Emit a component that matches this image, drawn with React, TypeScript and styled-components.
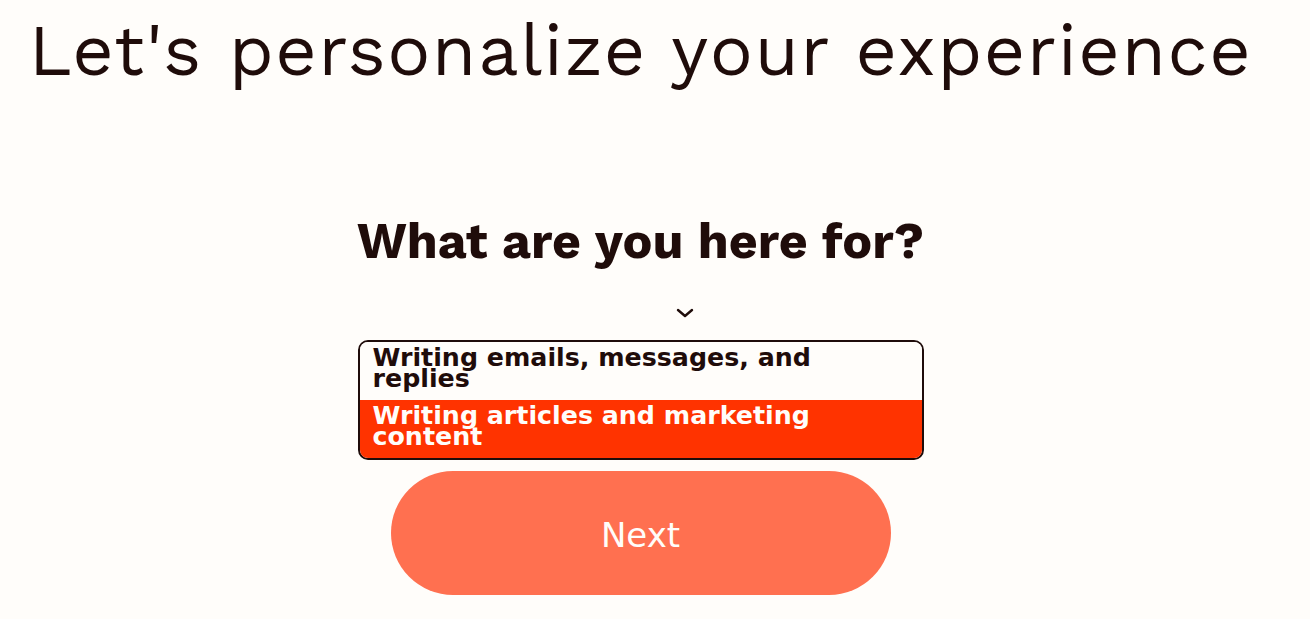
import React, { FC, useState } from 'react'
import styled, { createGlobalStyle } from 'styled-components'

const GlobalStyle = createGlobalStyle`
  html, body {
    margin: 0;
    padding: 0;
    background: #fffdfa;
  }
  * { box-sizing: border-box; }
`

const options: string[] = [
  'Writing emails, messages, and replies',
  'Writing articles and marketing content',
]

const App: FC = () => {
  const [selected, setSelected] = useState<number>(1)

  return (
    <Page>
      <GlobalStyle />
      <Title>Let's personalize your experience</Title>
      <Form>
        <Question>What are you here for?</Question>
        <Chevron viewBox="0 0 18 10" aria-hidden>
          <path d="M2 2 L9 8 L16 2" fill="none" stroke="#1f0c0a" strokeWidth="2.4" strokeLinecap="round" strokeLinejoin="round" />
        </Chevron>
        <ListBox role="listbox">
          {options.map((label, i) =>
            <Option key={`option_${i}`} selected={i === selected} onClick={() => setSelected(i)}>
              {label}
            </Option>
          )}
        </ListBox>
        <NextButton>Next</NextButton>
      </Form>
    </Page>
  )
}

const Page = styled.div`
  display: flex;
  flex-direction: column;
  align-items: center;
  width: 1281px;
  height: 619px;
  overflow: hidden;
  color: #1f0c0a;
`

const Title = styled.h1`
  margin: 7px 0 0 0;
  font-family: "Work Sans", Inter, "Open Sans", sans-serif;
  font-weight: 400;
  font-size: 72px;
  line-height: 86px;
  letter-spacing: 1.5px;
  white-space: nowrap;
`

const Form = styled.div`
  display: flex;
  flex-direction: column;
  align-items: center;
  margin-top: 120px;
`

const Question = styled.h2`
  margin: 0;
  font-family: "Work Sans", Inter, "Liberation Sans", sans-serif;
  font-weight: 700;
  font-size: 50px;
  line-height: 56px;
`

const Chevron = styled.svg`
  width: 18px;
  height: 10px;
  margin-top: 39px;
  margin-left: 88px;
`

const ListBox = styled.div`
  display: flex;
  flex-direction: column;
  width: 566px;
  margin-top: 22px;
  border: 2px solid #1f0c0a;
  border-radius: 10px;
  overflow: hidden;
  background: #fffdfa;
`

const Option = styled.div<{ selected: boolean }>`
  height: 58px;
  padding: 5px 13px 0 13px;
  font-family: "DejaVu Sans", Lato, sans-serif;
  font-weight: 700;
  font-size: 25.3px;
  line-height: 21px;
  cursor: pointer;
  ${({ selected }) => selected
    ? 'background: #ff3300; color: #fffdfa;'
    : 'background: #fffdfa; color: #1f0c0a;'}
`

const NextButton = styled.button`
  width: 500px;
  height: 124px;
  margin-top: 11px;
  border: none;
  border-radius: 62px;
  background: #ff7050;
  color: #fffdfa;
  font-family: "DejaVu Sans", Verdana, sans-serif;
  font-size: 34px;
  padding-top: 4px;
  cursor: pointer;
`

export default App
